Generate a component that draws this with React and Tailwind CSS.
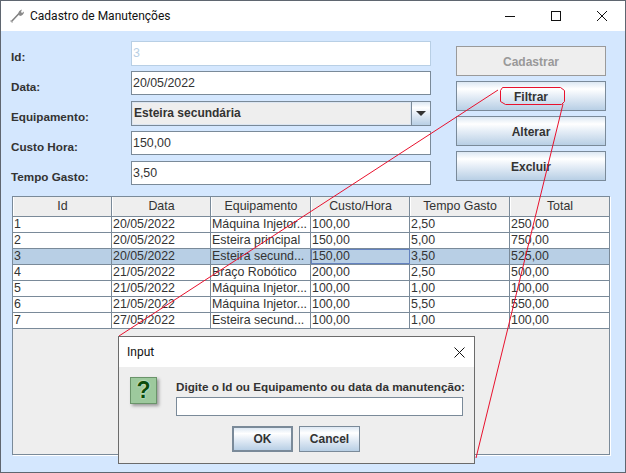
import React from "react";

const rows = [
  ["1", "20/05/2022", "Máquina Injetor...", "100,00", "2,50", "250,00"],
  ["2", "20/05/2022", "Esteira principal", "150,00", "5,00", "750,00"],
  ["3", "20/05/2022", "Esteira secund...", "150,00", "3,50", "525,00"],
  ["4", "21/05/2022", "Braço Robótico", "200,00", "2,50", "500,00"],
  ["5", "21/05/2022", "Máquina Injetor...", "100,00", "1,00", "100,00"],
  ["6", "21/05/2022", "Máquina Injetor...", "100,00", "5,50", "550,00"],
  ["7", "27/05/2022", "Esteira secund...", "100,00", "1,00", "100,00"],
];

const headers = ["Id", "Data", "Equipamento", "Custo/Hora", "Tempo Gasto", "Total"];
const gridCols = "grid grid-cols-[99px_99px_100px_99px_100px_100px]";
const metalBtn = "bg-[linear-gradient(#dde8f3_0%,#ffffff_25%,#e6eef7_50%,#b8cfe5_100%)]";

const Label = ({ children }) => (
  <div className="flex-1 pt-[7px] text-[11.7px] leading-[18px] font-bold text-[#333333]">{children}</div>
);

const Field = ({ label, value, h = "h-[24px]", disabled }) => (
  <div className="flex h-[30px]">
    <Label>{label}</Label>
    <div
      className={`w-[300px] ${h} bg-white border px-[1px] text-[12.4px] leading-[23px] ${
        disabled
          ? "border-[#b8cfe5] text-[#b8cfe5]"
          : "border-[#7a8a99] text-[#333333]"
      }`}
    >
      {value}
    </div>
  </div>
);

const Btn = ({ children }) => (
  <div
    className={`h-[30px] pt-px border border-[#7a8a99] ${metalBtn} flex items-center justify-center text-[12px] font-bold text-[#333333]`}
  >
    {children}
  </div>
);

const App = () => {
  return (
    <div className="relative w-[626px] h-[473px] overflow-hidden bg-[#d4e7fe] border border-[#5f6670] font-['Liberation_Sans',sans-serif]">
      {/* Title bar */}
      <div className="flex items-center h-[30px] bg-white pl-[8px]">
        <svg width="16" height="16" viewBox="0 0 16 16" fill="none">
          <path d="M2 14 10.500 5" stroke="#808080" strokeWidth="1.600" />
          <path d="M9.500 6.500c-.5-2.500 1-4.500 3.500-5l-1 2.500 1 1 2-1.500c0 2.500-1.500 4-4 4.500z" fill="#8a8a8a" />
          <path d="M1.500 12.500l2.500 2" stroke="#b0b0b0" strokeWidth="1" />
        </svg>
        <span className="ml-[5px] text-[12px] text-[#111111] font-['Roboto',sans-serif]">
          Cadastro de Manutenções
        </span>
        <div className="ml-auto flex items-center">
          <svg width="46" height="30" viewBox="0 0 46 30">
            <path d="M18 15.500h10" stroke="#111111" strokeWidth="1" />
          </svg>
          <svg width="46" height="30" viewBox="0 0 46 30">
            <rect x="18.500" y="10.500" width="9" height="9" fill="none" stroke="#111111" />
          </svg>
          <svg width="46" height="30" viewBox="0 0 46 30">
            <path d="M18 10l10 10M28 10l-10 10" stroke="#111111" strokeWidth="1" />
          </svg>
        </div>
      </div>

      {/* Form + buttons */}
      <div className="flex pl-[10px] pt-[10px] h-[165px]">
        <div className="w-[420px]">
          <Field label="Id:" value="3" h="h-[25px]" disabled />
          <Field label="Data:" value="20/05/2022" />
          <div className="flex h-[30px]">
            <Label>Equipamento:</Label>
            <div className="w-[300px] h-[25px] flex border border-[#7a8a99] bg-[#eeeeee]">
              <div className="flex-1 border border-[#dce6f2] px-[1px] text-[12px] leading-[21px] font-bold text-[#333333]">
                Esteira secundária
              </div>
              <div className={`w-[19px] border-l border-[#7a8a99] ${metalBtn} flex items-center justify-center`}>
                <div className="w-0 h-0 border-x-[5px] border-x-transparent border-t-[5px] border-t-[#333333]" />
              </div>
            </div>
          </div>
          <Field label="Custo Hora:" value="150,00" />
          <Field label="Tempo Gasto:" value="3,50" />
        </div>
        <div className="ml-[25px] mt-[5px] w-[150px] flex flex-col gap-[5px]">
          <div className="h-[30px] pt-px border border-[#9a9a9a] bg-[#eeeeee] flex items-center justify-center text-[12px] font-bold text-[#999999]">
            Cadastrar
          </div>
          <Btn>Filtrar</Btn>
          <Btn>Alterar</Btn>
          <Btn>Excluir</Btn>
        </div>
      </div>

      {/* Table */}
      <div className="ml-[11px] w-[598px] h-[259px] border border-[#7a8a99] shadow-[1px_1px_0_#ffffff] bg-[#eeeeee] text-[12.4px] text-[#333333]">
        <div className={`${gridCols} h-[20px] border-b border-[#7a8a99]`}>
          {headers.map((h) => (
            <div key={h} className="border-r border-[#7a8a99] border-l border-l-white text-center leading-[19px]">
              {h}
            </div>
          ))}
        </div>
        {rows.map((row) => (
          <div key={row[0]} className={`${gridCols} h-[16px] border-b border-[#7a8a99] ${row[0] === "3" ? "bg-[#b8cfe5]" : "bg-white"}`}>
            {row.map((cell, i) => (
              <div
                key={i}
                className={`pl-[1px] leading-[15px] whitespace-nowrap overflow-hidden border-r border-[#7a8a99] ${
                  row[0] === "3" && i === 3 ? "outline outline-[#6382bf] -outline-offset-1" : ""
                }`}
              >
                {cell}
              </div>
            ))}
          </div>
        ))}
      </div>

      {/* Red annotation */}
      <svg className="absolute left-[-1px] top-[-1px]" width="626" height="473" viewBox="0 0 626 473" fill="none" stroke="#e8112d" strokeWidth="1">
        <path d="M498 90 119 336" />
        <path d="M563 104 476 458" />
        <path d="M502.500 87.500h58l4 3v11l-3 3h-56l-5-3v-11z" />
      </svg>

      {/* Input dialog */}
      <div className="absolute left-[117px] top-[335px] w-[357px] h-[128px] border border-[#6b6b6b] bg-[#eeeeee]">
        <div className="flex items-center justify-between h-[30px] bg-white pl-[8px] pr-[9px]">
          <span className="text-[12px] text-[#111111] font-['Roboto',sans-serif]">Input</span>
          <svg width="11" height="11" viewBox="0 0 11 11">
            <path d="M.5.500l10 10M10.500.500l-10 10" stroke="#111111" strokeWidth="1" />
          </svg>
        </div>
        <div className="flex pl-[11px] pt-[10px]">
          <div className="w-[27px] h-[27px] bg-[#9dc99d] border border-[#6a946a] shadow-[2px_2px_3px_#9a9a9a] flex items-center justify-center text-[23px] leading-none font-bold text-[#0b4d0b] [text-shadow:0_0_1px_#e0f5e0,0_0_2px_#e0f5e0]">
            ?
          </div>
          <div className="ml-[19px] w-[288px]">
            <div className="text-[11.7px] leading-[15px] font-bold text-[#333333] whitespace-nowrap pt-[2px]">
              Digite o Id ou Equipamento ou data da manutenção:
            </div>
            <div className="mt-[3px] w-[287px] h-[19px] bg-white border border-[#7a8a99]" />
            <div className="flex mt-[10px] ml-[56px] gap-[6px]">
              <div className={`w-[61px] h-[26px] border-2 border-[#7a8a99] ${metalBtn} flex items-center justify-center text-[12px] font-bold text-[#333333]`}>
                OK
              </div>
              <div className={`w-[61px] h-[26px] border border-[#7a8a99] ${metalBtn} flex items-center justify-center text-[12px] font-bold text-[#333333]`}>
                Cancel
              </div>
            </div>
          </div>
        </div>
      </div>
    </div>
  );
};

export default App;
